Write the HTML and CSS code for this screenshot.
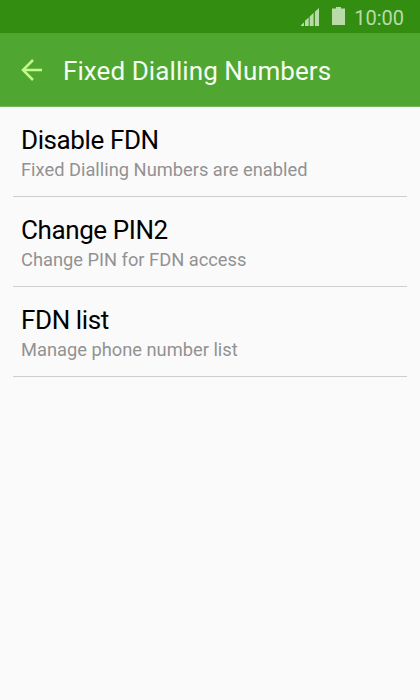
FILE: index.html
```html
<!DOCTYPE html>
<html lang="en">
<head>
<meta charset="utf-8">
<title>Fixed Dialling Numbers</title>
<link rel="stylesheet" href="styles.css">
</head>
<body>
<div class="status">
  <svg class="signal" width="19" height="18" viewBox="0 0 19 18"><path d="M0 18v-1l3-2.500v3.500zM4 18v-5.200l3.700-3.400v8.600zM8.700 18V8.400l3.900-3.700v13.300zM13.900 18V3.800l4.100-3.800v18z"/></svg>
  <svg class="battery" width="13" height="18" viewBox="0 0 13 18"><path d="M4 0h5v1.500h4v16.500H0V1.500h4z"/></svg>
  <span class="time">10:00</span>
</div>
<header class="bar">
  <svg class="back" width="22" height="22" viewBox="0 0 22 22"><path d="M21 11H2M12 1L2 11L12 21"/></svg>
  <h1 class="title">Fixed Dialling Numbers</h1>
</header>
<main class="list">
  <div class="item"><div class="name">Disable FDN</div><div class="desc">Fixed Dialling Numbers are enabled</div></div>
  <div class="item"><div class="name">Change PIN2</div><div class="desc">Change PIN for FDN access</div></div>
  <div class="item"><div class="name">FDN list</div><div class="desc">Manage phone number list</div></div>
</main>
</body>
</html>
```
FILE: styles.css
```css
* { box-sizing: border-box; }
body { margin: 0; height: 700px; background: #fafafa; font-family: Roboto, sans-serif; overflow: hidden; }
.status { height: 33px; background: #338d11; display: flex; align-items: flex-start; padding: 6px 16px 0 0; justify-content: flex-end; }
.signal, .battery { fill: #b9dba9; }
.signal { margin: 2px 12px 0 0; }
.battery { margin: 1px 9px 0 0; height: 18px; }
.time { color: #b9dba9; font-size: 20px; line-height: 24px; }
.bar { height: 74px; background: #4fa731; border-bottom: 1px solid #74b95d; display: flex; align-items: center; padding-left: 21px; }
.back { fill: none; stroke: #c5f98c; stroke-width: 2.5; margin-right: 20px; }
.title { margin: 2px 0 0; font-size: 26px; font-weight: 400; color: #f5fcf0; line-height: 32px; letter-spacing: 0.08px; }
.list { padding: 0 13px; }
.item { height: 90px; border-bottom: 1px solid #cecece; padding: 17px 8px 0; }
.name { font-size: 26px; line-height: 32px; color: #000; letter-spacing: -0.4px; }
.desc { font-size: 18.3px; line-height: 24px; color: #929292; margin-top: 2px; }
```
